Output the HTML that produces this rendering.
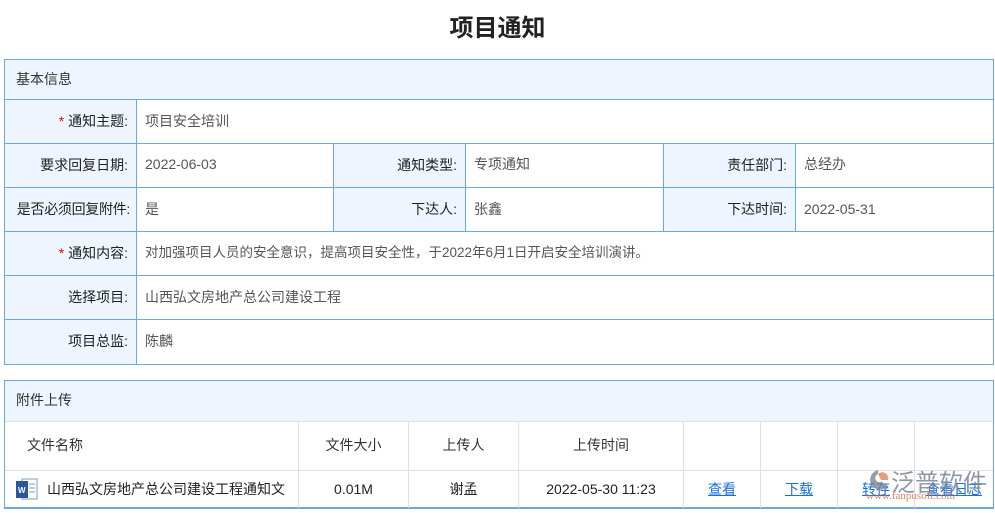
<!DOCTYPE html>
<html><head><meta charset="utf-8"><style>
body{margin:0;width:995px;height:513px;background:#fff;font-family:"Liberation Sans","Noto Sans CJK SC",sans-serif;font-size:14px;color:#333;position:relative;overflow:hidden}
.a{position:absolute;box-sizing:border-box}
.t{left:0;width:995px;top:8px;text-align:center;font-size:24px;font-weight:bold;color:#222}
.p{border:1px solid #6aa8e0}
.h{background:#eef5fe}
.l{background:#eef5fe;border-right:1px solid #6aa8e0;border-bottom:1px solid #6aa8e0;text-align:right;padding-right:8px;line-height:43px;color:#222}
.v{border-right:1px solid #6aa8e0;border-bottom:1px solid #6aa8e0;padding-left:8px;line-height:43px;color:#555}
.c{border-right:1px solid #e0e0e0;border-bottom:1px solid #e0e0e0;text-align:center}
.lk{color:#1a6fd8;text-decoration:underline}
.s{color:#e00}
</style></head><body>
<div class="a t">项目通知</div>
<div class="a p" style="left:4px;top:59px;width:990px;height:306px"></div>
<div class="a h" style="left:5px;top:60px;width:988px;height:40px;border-bottom:1px solid #6aa8e0;padding-left:11px;line-height:38px">基本信息</div>

<div class="a l" style="left:5px;top:100px;width:132px;height:44px"><span class="s">* </span>通知主题:</div>
<div class="a v" style="left:137px;top:100px;width:856px;height:44px;line-height:42px;border-right:none">项目安全培训</div>

<div class="a l" style="left:5px;top:144px;width:132px;height:44px">要求回复日期:</div>
<div class="a v" style="left:137px;top:144px;width:197px;height:44px;line-height:40px">2022-06-03</div>
<div class="a l" style="left:334px;top:144px;width:132px;height:44px">通知类型:</div>
<div class="a v" style="left:466px;top:144px;width:198px;height:44px;line-height:40px">专项通知</div>
<div class="a l" style="left:664px;top:144px;width:132px;height:44px">责任部门:</div>
<div class="a v" style="left:796px;top:144px;width:197px;height:44px;line-height:40px;border-right:none">总经办</div>

<div class="a l" style="left:5px;top:188px;width:132px;height:44px;padding-right:6px;letter-spacing:-0.3px">是否必须回复附件:</div>
<div class="a v" style="left:137px;top:188px;width:197px;height:44px;line-height:42px">是</div>
<div class="a l" style="left:334px;top:188px;width:132px;height:44px">下达人:</div>
<div class="a v" style="left:466px;top:188px;width:198px;height:44px;line-height:42px">张鑫</div>
<div class="a l" style="left:664px;top:188px;width:132px;height:44px">下达时间:</div>
<div class="a v" style="left:796px;top:188px;width:197px;height:44px;line-height:42px;border-right:none">2022-05-31</div>

<div class="a l" style="left:5px;top:232px;width:132px;height:44px"><span class="s">* </span>通知内容:</div>
<div class="a v" style="left:137px;top:232px;width:856px;height:44px;line-height:42px;border-right:none;font-size:13.5px">对加强项目人员的安全意识，提高项目安全性，于2022年6月1日开启安全培训演讲。</div>
<div class="a l" style="left:5px;top:276px;width:132px;height:44px">选择项目:</div>
<div class="a v" style="left:137px;top:276px;width:856px;height:44px;line-height:42px;border-right:none">山西弘文房地产总公司建设工程</div>
<div class="a l" style="left:5px;top:320px;width:132px;height:44px;border-bottom:none">项目总监:</div>
<div class="a v" style="left:137px;top:320px;width:856px;height:44px;line-height:42px;border:none">陈麟</div>

<div class="a p" style="left:4px;top:380px;width:990px;height:129px;border-bottom:2px solid #6aa8e0"></div>
<div class="a h" style="left:5px;top:381px;width:988px;height:41px;border-bottom:1px solid #e0e0e0;padding-left:11px;line-height:39px">附件上传</div>
<div class="a c" style="left:5px;top:422px;width:294px;height:49px;line-height:47px;text-align:left;padding-left:22px">文件名称</div>
<div class="a c" style="left:299px;top:422px;width:110px;height:49px;line-height:47px">文件大小</div>
<div class="a c" style="left:409px;top:422px;width:110px;height:49px;line-height:47px">上传人</div>
<div class="a c" style="left:519px;top:422px;width:165px;height:49px;line-height:47px">上传时间</div>
<div class="a c" style="left:684px;top:422px;width:77px;height:49px"></div>
<div class="a c" style="left:761px;top:422px;width:77px;height:49px"></div>
<div class="a c" style="left:838px;top:422px;width:77px;height:49px"></div>
<div class="a c" style="left:915px;top:422px;width:78px;height:49px;border-right:none"></div>

<div class="a c" style="left:5px;top:471px;width:294px;height:37px;line-height:36px;text-align:left;padding-left:42px;border-bottom:none;color:#222">山西弘文房地产总公司建设工程通知文</div>
<svg class="a" style="left:16px;top:477px" width="22" height="24"><rect x="6" y="2" width="15" height="20" fill="#fff" stroke="#7a9cc8"/><line x1="13" y1="7" x2="19" y2="7" stroke="#7a9cc8"/><line x1="13" y1="11" x2="19" y2="11" stroke="#7a9cc8"/><line x1="13" y1="15" x2="19" y2="15" stroke="#7a9cc8"/><rect x="0" y="4" width="12" height="17" fill="#2b579a"/><text x="2" y="16" font-size="8" fill="#fff" font-weight="bold" font-family="Liberation Sans">W</text></svg>
<div class="a c" style="left:299px;top:471px;width:110px;height:37px;line-height:36px;border-bottom:none;color:#222">0.01M</div>
<div class="a c" style="left:409px;top:471px;width:110px;height:37px;line-height:36px;border-bottom:none;color:#222">谢孟</div>
<div class="a c" style="left:519px;top:471px;width:165px;height:37px;line-height:36px;border-bottom:none;color:#222">2022-05-30 11:23</div>
<div class="a c" style="left:684px;top:471px;width:77px;height:37px;line-height:36px;border-bottom:none"><span class="lk">查看</span></div>
<div class="a c" style="left:761px;top:471px;width:77px;height:37px;line-height:36px;border-bottom:none"><span class="lk">下载</span></div>
<div class="a c" style="left:838px;top:471px;width:77px;height:37px;line-height:36px;border-bottom:none"><span class="lk">转存</span></div>
<div class="a c" style="left:915px;top:471px;width:78px;height:37px;line-height:36px;border:none"><span class="lk">查看日志</span></div>
<svg class="a" style="left:864px;top:468px" width="28" height="22"><path d="M14 2 A10 10 0 1 0 24 18 L17 14 A4 4 0 1 1 14 6 Z" fill="#7b8598" opacity=".8"/><path d="M14 6 A6 6 0 0 1 24 12 L17 12 Z" fill="#d98a60" opacity=".8"/></svg>
<div class="a" style="left:891px;top:463px;font-size:24px;color:#7b8598;opacity:.85;letter-spacing:0px">泛普软件</div>
<div class="a" style="left:866px;top:490px;font-size:11px;color:#d07050;font-family:'Liberation Serif',serif;opacity:.85">www.fanpusoft.com</div>
</body></html>
